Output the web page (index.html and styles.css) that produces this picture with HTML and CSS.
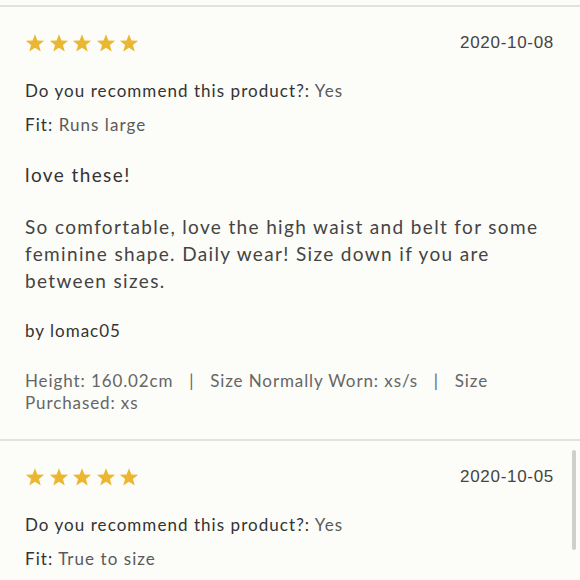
FILE: index.html
```html
<!DOCTYPE html>
<html>
<head>
<meta charset="utf-8">
<link rel="stylesheet" href="styles.css">
</head>
<body>
<div class="page">
  <div class="review">
    <div class="head">
      <div class="stars">
        <svg class="star" viewBox="0 0 24 24"><polygon points="12,1.5 14.9,9 23,9.3 16.7,14.4 18.9,22.3 12,17.8 5.1,22.3 7.3,14.4 1,9.3 9.1,9"/></svg>
        <svg class="star" viewBox="0 0 24 24"><polygon points="12,1.5 14.9,9 23,9.3 16.7,14.4 18.9,22.3 12,17.8 5.1,22.3 7.3,14.4 1,9.3 9.1,9"/></svg>
        <svg class="star" viewBox="0 0 24 24"><polygon points="12,1.5 14.9,9 23,9.3 16.7,14.4 18.9,22.3 12,17.8 5.1,22.3 7.3,14.4 1,9.3 9.1,9"/></svg>
        <svg class="star" viewBox="0 0 24 24"><polygon points="12,1.5 14.9,9 23,9.3 16.7,14.4 18.9,22.3 12,17.8 5.1,22.3 7.3,14.4 1,9.3 9.1,9"/></svg>
        <svg class="star" viewBox="0 0 24 24"><polygon points="12,1.5 14.9,9 23,9.3 16.7,14.4 18.9,22.3 12,17.8 5.1,22.3 7.3,14.4 1,9.3 9.1,9"/></svg>
      </div>
      <div class="date">2020-10-08</div>
    </div>
    <div class="rec"><span class="label">Do you recommend this product?:</span> <span class="value">Yes</span></div>
    <div class="fit"><span class="label">Fit:</span> <span class="value">Runs large</span></div>
    <div class="title">love these!</div>
    <div class="body">So comfortable, love the high waist and belt for some feminine shape. Daily wear! Size down if you are between sizes.</div>
    <div class="by">by lomac05</div>
    <div class="meta">Height: 160.02cm &nbsp; | &nbsp; Size Normally Worn: xs/s &nbsp; | &nbsp; Size Purchased: xs</div>
  </div>
  <div class="review">
    <div class="head">
      <div class="stars">
        <svg class="star" viewBox="0 0 24 24"><polygon points="12,1.5 14.9,9 23,9.3 16.7,14.4 18.9,22.3 12,17.8 5.1,22.3 7.3,14.4 1,9.3 9.1,9"/></svg>
        <svg class="star" viewBox="0 0 24 24"><polygon points="12,1.5 14.9,9 23,9.3 16.7,14.4 18.9,22.3 12,17.8 5.1,22.3 7.3,14.4 1,9.3 9.1,9"/></svg>
        <svg class="star" viewBox="0 0 24 24"><polygon points="12,1.5 14.9,9 23,9.3 16.7,14.4 18.9,22.3 12,17.8 5.1,22.3 7.3,14.4 1,9.3 9.1,9"/></svg>
        <svg class="star" viewBox="0 0 24 24"><polygon points="12,1.5 14.9,9 23,9.3 16.7,14.4 18.9,22.3 12,17.8 5.1,22.3 7.3,14.4 1,9.3 9.1,9"/></svg>
        <svg class="star" viewBox="0 0 24 24"><polygon points="12,1.5 14.9,9 23,9.3 16.7,14.4 18.9,22.3 12,17.8 5.1,22.3 7.3,14.4 1,9.3 9.1,9"/></svg>
      </div>
      <div class="date">2020-10-05</div>
    </div>
    <div class="rec"><span class="label">Do you recommend this product?:</span> <span class="value">Yes</span></div>
    <div class="fit"><span class="label">Fit:</span> <span class="value">True to size</span></div>
  </div>
  <div class="scrollbar"></div>
</div>
</body>
</html>
```

FILE: styles.css
```css
html, body {
  margin: 0;
  padding: 0;
  background: #fcfcf8;
  height: 580px;
  overflow: hidden;
}
.page {
  padding-top: 5px;
  font-family: "Lato", "Liberation Sans", sans-serif;
  color: #333;
}
.review {
  border-top: 2px solid #e3e3de;
  padding: 26px 25px 25px 25px;
}
.head {
  display: flex;
  justify-content: space-between;
  align-items: center;
  height: 20px;
}
.stars {
  display: flex;
  gap: 3.5px;
}
.star {
  width: 20px;
  height: 20px;
  fill: #ebb730;
  display: block;
}
.date {
  font-family: "Liberation Sans", sans-serif;
  font-size: 17px;
  letter-spacing: 0.7px;
  color: #444;
  margin-right: 1px;
}
.rec {
  margin-top: 27px;
  font-size: 17px;
  line-height: 22px;
  letter-spacing: 1.05px;
}
.fit {
  margin-top: 12px;
  font-size: 17px;
  line-height: 22px;
  letter-spacing: 1.05px;
}
.label { color: #333; }
.value { color: #5a5a5a; }
.title {
  margin-top: 27px;
  font-size: 19px;
  line-height: 24px;
  letter-spacing: 1.4px;
  color: #333;
}
.body {
  margin-top: 26px;
  font-size: 19px;
  line-height: 27px;
  letter-spacing: 1.35px;
  color: #444;
}
.by {
  margin-top: 26px;
  font-size: 17px;
  line-height: 22px;
  letter-spacing: 1px;
  color: #333;
}
.meta {
  margin-top: 28px;
  font-size: 17px;
  line-height: 22px;
  letter-spacing: 0.9px;
  color: #666;
  padding-right: 25px;
}
.scrollbar {
  position: absolute;
  top: 450px;
  left: 572px;
  width: 4px;
  height: 100px;
  border-radius: 2px;
  background: #cfcfcb;
}
```
